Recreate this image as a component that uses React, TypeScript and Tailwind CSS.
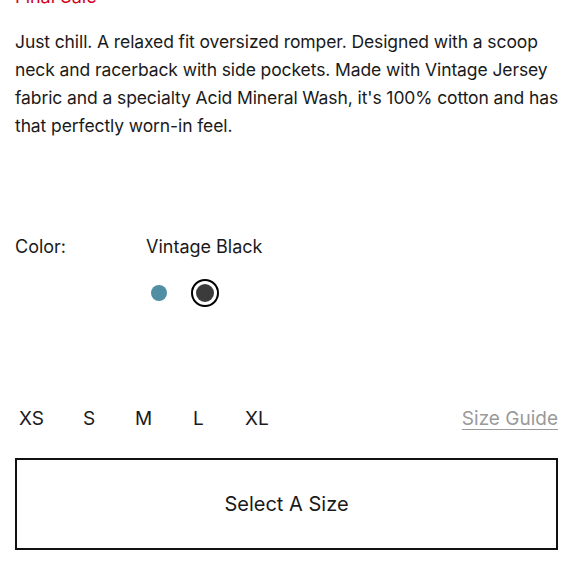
const sizes = [
    { label: "XS", w: "w-[64px]" },
    { label: "S", w: "w-[52px]" },
    { label: "M", w: "w-[58px]" },
    { label: "L", w: "w-[52px]" },
    { label: "XL", w: "w-[40px]" },
];

export default function App() {
    return (
        <div className="w-[580px] h-[580px] overflow-hidden bg-white text-[#1a1a1a] font-['Inter',sans-serif]">
            <div className="ml-[15px] w-[543px]">
                <p className="-mt-[15px] h-[24px] text-[18px] leading-[24px] text-[#d0021b]">Final Sale</p>
                <p className="mt-[19px] w-[552px] text-[17.5px] leading-[28px] tracking-[-0.1px]">
                    Just chill. A relaxed fit oversized romper. Designed with a scoop neck and racerback with side pockets. Made with
                    Vintage Jersey fabric and a specialty Acid Mineral Wash, it&apos;s 100% cotton and has that perfectly worn-in feel.
                </p>

                <div className="mt-[93px] flex text-[18px] leading-[28px]">
                    <span className="w-[131px]">Color:</span>
                    <span>Vintage Black</span>
                </div>
                <div className="mt-[18px] flex items-center gap-[24px] pl-[136px]">
                    <span className="w-[16px] h-[16px] rounded-full bg-[#4f8ea3]" />
                    <span className="w-[28px] h-[28px] rounded-full border-2 border-black flex items-center justify-center">
                        <span className="w-[18px] h-[18px] rounded-full bg-[#3b3b3b]" />
                    </span>
                </div>

                <div className="mt-[98px] flex items-center justify-between text-[19px] leading-[28px]">
                    <div className="flex pl-[4px]">
                        {sizes.map((s) => (
                            <span key={s.label} className={s.w}>
                                {s.label}
                            </span>
                        ))}
                    </div>
                    <a className="text-[#9a9a9a] underline underline-offset-[4px]">Size Guide</a>
                </div>

                <button className="mt-[25px] w-full h-[92px] border-2 border-[#111] text-[20px] flex items-center justify-center">
                    Select A Size
                </button>
            </div>
        </div>
    );
}
